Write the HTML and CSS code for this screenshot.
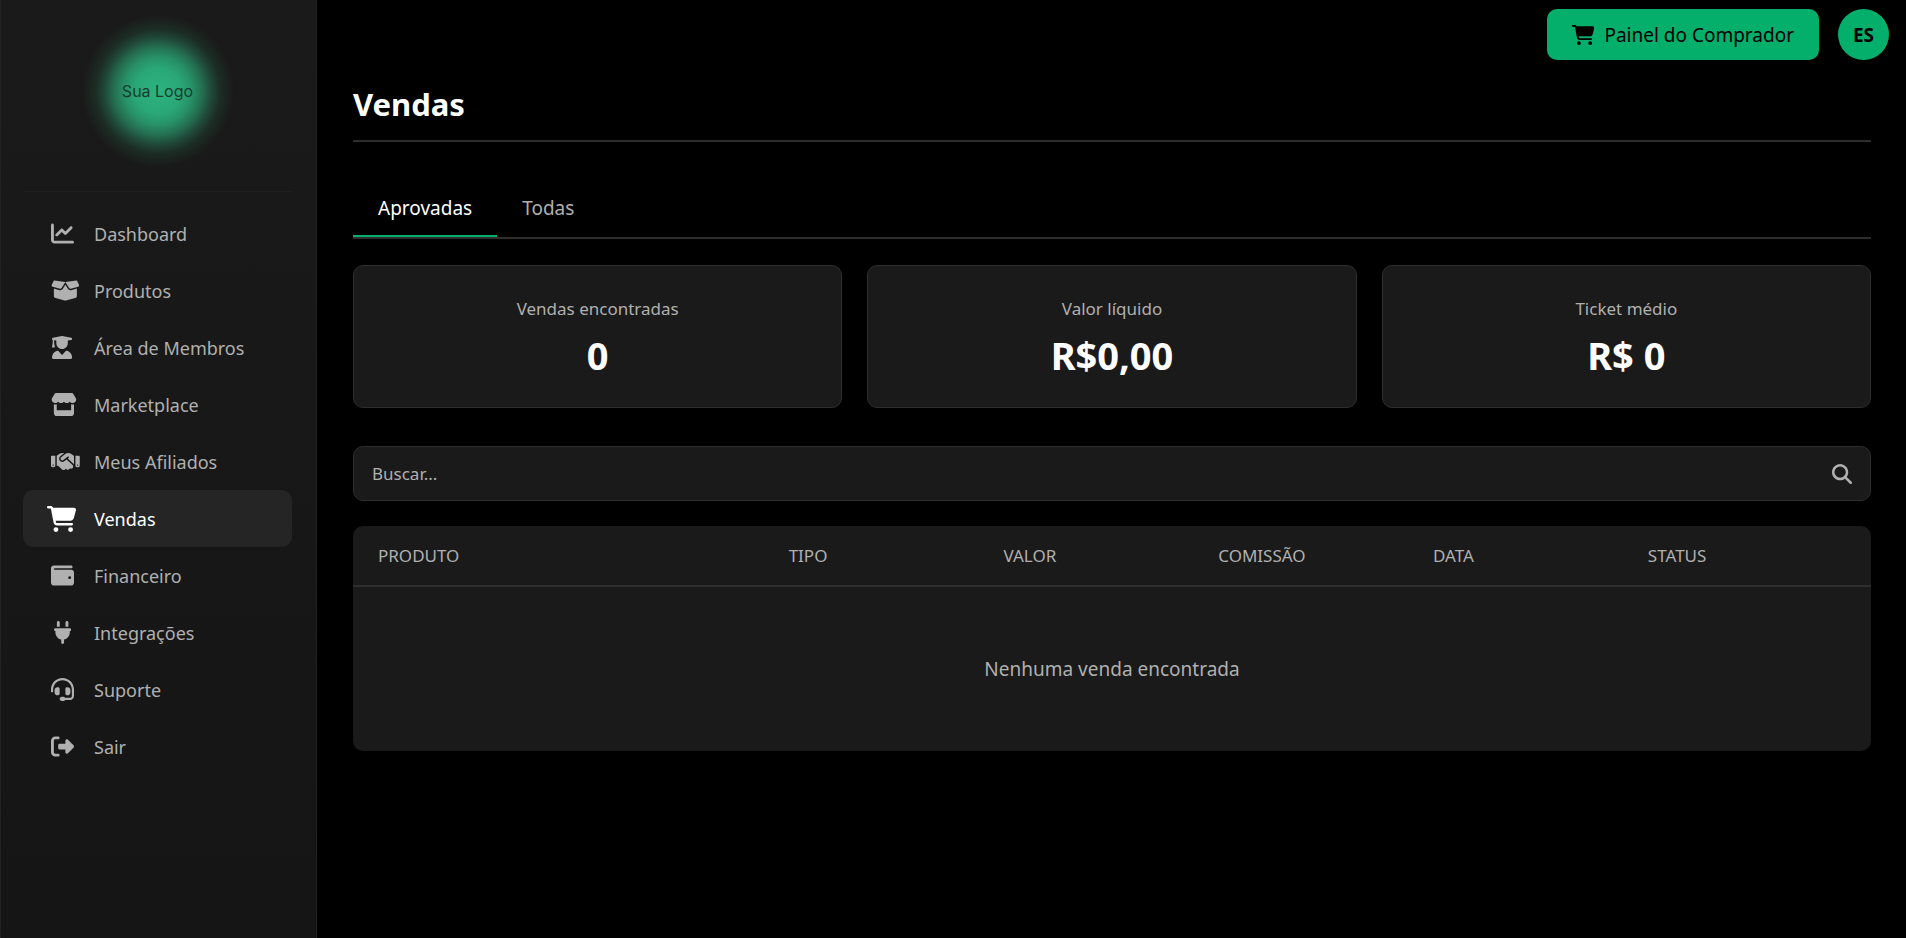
FILE: index.html
```
<!DOCTYPE html>
<html lang="pt-BR">
<head>
    <meta charset="UTF-8">
    <meta name="viewport" content="width=device-width, initial-scale=1.0">
    <title>Vendas</title>
    <link rel="stylesheet" href="styles.css">
</head>
<body>
    <aside class="sidebar">
        <div class="logo">Sua Logo</div>

        <nav class="menu">
            <a href="#" class="menu-item">
                <span class="menu-icon"><svg class="icon" viewBox="0 0 512 512"><path d="M64 64c0-17.7-14.3-32-32-32S0 46.3 0 64V400c0 44.2 35.8 80 80 80H480c17.7 0 32-14.3 32-32s-14.3-32-32-32H80c-8.8 0-16-7.2-16-16V64zm406.6 86.6c12.5-12.5 12.5-32.8 0-45.3s-32.8-12.5-45.3 0L320 210.7l-57.4-57.4c-12.5-12.5-32.8-12.5-45.3 0l-112 112c-12.5 12.5-12.5 32.8 0 45.3s32.8 12.5 45.3 0L240 221.3l57.4 57.4c12.5 12.5 32.8 12.5 45.3 0l128-128z"/></svg></span>
                Dashboard
            </a>
            <a href="#" class="menu-item">
                <span class="menu-icon"><svg class="icon" viewBox="0 0 640 512"><path d="M58.9 42.1c3-6.1 9.6-9.6 16.3-8.7L320 64 564.8 33.4c6.7-.8 13.3 2.7 16.3 8.7l41.7 83.4c9 17.9-.6 39.6-19.8 45.1L439.6 217.3c-13.9 4-28.8-1.9-36.2-14.3L320 64 236.6 203c-7.4 12.4-22.3 18.3-36.2 14.3L37.1 170.6c-19.3-5.5-28.8-27.2-19.8-45.1L58.9 42.1zM321.1 128l54.9 91.4c14.9 24.8 44.6 36.6 72.5 28.6L576 211.6v167c0 22-15 41.2-36.4 46.6l-204.1 51c-10.2 2.6-20.9 2.6-31 0l-204.1-51C79 419.7 64 400.5 64 378.5v-167L191.6 248c27.8 8 57.6-3.8 72.5-28.6L318.9 128h2.2z"/></svg></span>
                Produtos
            </a>
            <a href="#" class="menu-item">
                <span class="menu-icon"><svg class="icon" viewBox="0 0 448 512"><path d="M219.3 .5c3.1-.6 6.3-.6 9.4 0l200 40C439.9 42.7 448 52.6 448 64s-8.1 21.3-19.3 23.5L352 102.9V160c0 70.7-57.3 128-128 128s-128-57.3-128-128V102.9L48 93.3v65.1l15.7 78.4c.9 4.7-.3 9.6-3.3 13.3s-7.6 5.9-12.4 5.9H16c-4.8 0-9.3-2.1-12.4-5.9s-4.3-8.6-3.3-13.3L16 158.4V86.6C6.5 83.3 0 74.3 0 64C0 52.6 8.1 42.7 19.3 40.5l200-40zM111.9 327.7c10.5-3.4 21.8 .4 29.4 8.5l71 75.5c6.3 6.7 17 6.7 23.3 0l71-75.5c7.6-8.1 18.9-11.9 29.4-8.5C401 348.6 448 409.4 448 481.3c0 17-13.8 30.7-30.7 30.7H30.7C13.8 512 0 498.2 0 481.3c0-71.9 47-132.7 111.9-153.6z"/></svg></span>
                Área de Membros
            </a>
            <a href="#" class="menu-item">
                <span class="menu-icon"><svg class="icon" viewBox="0 0 576 512"><path d="M547.6 103.8L490.3 13.1C485.2 5 476.1 0 466.4 0H109.6C99.9 0 90.8 5 85.7 13.1L28.3 103.8c-29.6 46.8-3.4 111.9 51.9 119.4c4 .5 8.1 .8 12.1 .8c26.1 0 49.3-11.4 65.2-29c15.9 17.6 39.1 29 65.2 29c26.1 0 49.3-11.4 65.2-29c15.9 17.6 39.1 29 65.2 29c26.2 0 49.3-11.4 65.2-29c16 17.6 39.1 29 65.2 29c4.1 0 8.1-.3 12.1-.8c55.5-7.4 81.8-72.5 52.1-119.4zM499.7 254.9l-.1 0c-5.3 .7-10.7 1.1-16.2 1.1c-12.4 0-24.3-1.9-35.4-5.3V384H128V250.6c-11.2 3.5-23.2 5.4-35.6 5.4c-5.5 0-11-.4-16.3-1.1l-.1 0c-4.1-.6-8.1-1.3-12-2.3V384v64c0 35.3 28.7 64 64 64H448c35.3 0 64-28.7 64-64V384 252.6c-4 1-8 1.8-12.3 2.3z"/></svg></span>
                Marketplace
            </a>
            <a href="#" class="menu-item">
                <span class="menu-icon"><svg class="icon" viewBox="0 0 640 512"><path d="M323.4 85.2l-96.8 78.4c-16.1 13-19.2 36.4-7 53.1c12.9 17.8 38 21.3 55.3 7.8l99.3-77.2c7-5.4 17-4.2 22.5 2.8s4.2 17-2.8 22.5l-20.9 16.2L512 316.8V128h-.7l-3.9-2.5L434.8 79c-15.3-9.8-33.2-15-51.4-15c-21.8 0-43 7.5-60 21.2zm22.8 124.4l-51.7 40.2C263 274.3 217.3 268 193.7 235.6c-22.2-30.5-16.6-73.1 12.7-96.8l83.2-67.3c-11.6-4.9-24.1-7.4-36.8-7.4C234 64 215.7 69.6 200 80l-72 48V352h28.2l91.4 83.4c19.6 17.9 49.9 16.5 67.8-3.1c5.5-6.1 9.2-13.2 11.1-20.6l17 15.6c19.5 17.9 49.9 16.6 67.8-2.9c4.5-4.9 7.8-10.6 9.9-16.5c19.4 13 45.8 10.3 62.1-7.5c17.9-19.5 16.6-49.9-2.9-67.8l-134.2-123zM16 128c-8.8 0-16 7.2-16 16V352c0 17.7 14.3 32 32 32H64c17.7 0 32-14.3 32-32V128H16zM48 320a16 16 0 1 1 0 32 16 16 0 1 1 0-32zM544 128V352c0 17.7 14.3 32 32 32h32c17.7 0 32-14.3 32-32V144c0-8.8-7.2-16-16-16H544zm32 208a16 16 0 1 1 32 0 16 16 0 1 1 -32 0z"/></svg></span>
                Meus Afiliados
            </a>
            <a href="#" class="menu-item active" aria-current="page">
                <span class="menu-icon"><svg class="icon" viewBox="0 0 576 512"><path d="M0 24C0 10.7 10.7 0 24 0H69.5c22 0 41.5 12.8 50.6 32h411c26.3 0 45.5 25 38.6 50.4l-41 152.3c-8.5 31.4-37 53.3-69.5 53.3H170.7l5.4 28.5c2.2 11.3 12.1 19.5 23.6 19.5H488c13.3 0 24 10.7 24 24s-10.7 24-24 24H199.7c-34.6 0-64.3-24.6-70.7-58.5L77.4 54.5c-.7-3.8-4-6.5-7.9-6.5H24C10.7 48 0 37.3 0 24zM128 464a48 48 0 1 1 96 0 48 48 0 1 1 -96 0zm336-48a48 48 0 1 1 0 96 48 48 0 1 1 0-96z"/></svg></span>
                Vendas
            </a>
            <a href="#" class="menu-item">
                <span class="menu-icon"><svg class="icon" viewBox="0 0 512 512"><path d="M64 32C28.7 32 0 60.7 0 96V416c0 35.3 28.7 64 64 64H448c35.3 0 64-28.7 64-64V192c0-35.3-28.7-64-64-64H80c-8.8 0-16-7.2-16-16s7.2-16 16-16H448c17.7 0 32-14.3 32-32s-14.3-32-32-32H64zM416 272a32 32 0 1 1 0 64 32 32 0 1 1 0-64z"/></svg></span>
                Financeiro
            </a>
            <a href="#" class="menu-item">
                <span class="menu-icon"><svg class="icon" viewBox="0 0 384 512"><path d="M96 0C78.3 0 64 14.3 64 32v96h64V32c0-17.7-14.3-32-32-32zM288 0c-17.7 0-32 14.3-32 32v96h64V32c0-17.7-14.3-32-32-32zM32 160c-17.7 0-32 14.3-32 32s14.3 32 32 32v32c0 77.4 55 142 128 156.8V480c0 17.7 14.3 32 32 32s32-14.3 32-32V412.8C297 398 352 333.4 352 256V224c17.7 0 32-14.3 32-32s-14.3-32-32-32H32z"/></svg></span>
                Integrações
            </a>
            <a href="#" class="menu-item">
                <span class="menu-icon"><svg class="icon" viewBox="0 0 512 512"><path d="M256 48C141.1 48 48 141.1 48 256v40c0 13.3-10.7 24-24 24s-24-10.7-24-24V256C0 114.6 114.6 0 256 0S512 114.6 512 256V400.1c0 48.6-39.4 88-88.1 88L313.6 488c-8.3 14.3-23.8 24-41.6 24H240c-26.5 0-48-21.5-48-48s21.5-48 48-48h32c17.8 0 33.3 9.7 41.6 24l110.4 .1c22.1 0 40-17.9 40-40V256c0-114.9-93.1-208-208-208zM144 208h16c17.7 0 32 14.3 32 32V352c0 17.7-14.3 32-32 32H144c-35.3 0-64-28.7-64-64V272c0-35.3 28.7-64 64-64zm224 0c35.3 0 64 28.7 64 64v48c0 35.3-28.7 64-64 64H352c-17.7 0-32-14.3-32-32V240c0-17.7 14.3-32 32-32h16z"/></svg></span>
                Suporte
            </a>
            <a href="#" class="menu-item">
                <span class="menu-icon"><svg class="icon" viewBox="0 0 512 512"><path d="M377.9 105.9L500.7 228.7c7.2 7.2 11.3 17.1 11.3 27.3s-4.1 20.1-11.3 27.3L377.9 406.1c-6.4 6.4-15 9.9-24 9.9c-18.7 0-33.9-15.2-33.9-33.9l0-62.1-128 0c-17.7 0-32-14.3-32-32l0-64c0-17.7 14.3-32 32-32l128 0 0-62.1c0-18.7 15.2-33.9 33.9-33.9c9 0 17.6 3.6 24 9.9zM160 96L96 96c-17.7 0-32 14.3-32 32l0 256c0 17.7 14.3 32 32 32l64 0c17.7 0 32 14.3 32 32s-14.3 32-32 32l-64 0c-53 0-96-43-96-96L0 128C0 75 43 32 96 32l64 0c17.7 0 32 14.3 32 32s-14.3 32-32 32z"/></svg></span>
                Sair
            </a>
        </nav>
    </aside>

    <div class="page">
        <header class="topbar">
            <button type="button" class="btn-buyer">
                <svg class="icon" viewBox="0 0 576 512"><path d="M0 24C0 10.7 10.7 0 24 0H69.5c22 0 41.5 12.8 50.6 32h411c26.3 0 45.5 25 38.6 50.4l-41 152.3c-8.5 31.4-37 53.3-69.5 53.3H170.7l5.4 28.5c2.2 11.3 12.1 19.5 23.6 19.5H488c13.3 0 24 10.7 24 24s-10.7 24-24 24H199.7c-34.6 0-64.3-24.6-70.7-58.5L77.4 54.5c-.7-3.8-4-6.5-7.9-6.5H24C10.7 48 0 37.3 0 24zM128 464a48 48 0 1 1 96 0 48 48 0 1 1 -96 0zm336-48a48 48 0 1 1 0 96 48 48 0 1 1 0-96z"/></svg>
                Painel do Comprador
            </button>
            <button type="button" class="avatar">ES</button>
        </header>

        <main class="content">
            <h1 class="page-title">Vendas</h1>

            <div class="tabs" role="tablist">
                <button type="button" class="tab active" role="tab" aria-selected="true">Aprovadas</button>
                <button type="button" class="tab" role="tab" aria-selected="false">Todas</button>
            </div>

            <div class="cards">
                <div class="card">
                    <div class="card-label">Vendas encontradas</div>
                    <div class="card-value">0</div>
                </div>
                <div class="card">
                    <div class="card-label">Valor líquido</div>
                    <div class="card-value">R$0,00</div>
                </div>
                <div class="card">
                    <div class="card-label">Ticket médio</div>
                    <div class="card-value">R$ 0</div>
                </div>
            </div>

            <form class="search">
                <input type="text" class="search-input" placeholder="Buscar..." aria-label="Buscar">
                <button type="submit" class="search-btn" aria-label="Pesquisar">
                    <svg class="icon" viewBox="0 0 512 512"><path d="M416 208c0 45.9-14.9 88.3-40 122.7L502.6 457.4c12.5 12.5 12.5 32.8 0 45.3s-32.8 12.5-45.3 0L330.7 376c-34.4 25.2-76.8 40-122.7 40C93.1 416 0 322.9 0 208S93.1 0 208 0S416 93.1 416 208zM208 352a144 144 0 1 0 0-288 144 144 0 1 0 0 288z"/></svg>
                </button>
            </form>

            <table class="sales">
                <thead>
                    <tr>
                        <th class="col-product">Produto</th>
                        <th>Tipo</th>
                        <th>Valor</th>
                        <th>Comissão</th>
                        <th>Data</th>
                        <th class="col-status">Status</th>
                    </tr>
                </thead>
                <tbody>
                    <tr>
                        <td class="empty" colspan="6">Nenhuma venda encontrada</td>
                    </tr>
                </tbody>
            </table>
        </main>
    </div>
</body>
</html>
```
FILE: styles.css
```
:root {
    --primary: #04af6c;
    --background: #000000;
    --surface: #1a1a1a;
    --surface-active: #252525;
    --border: #2e2e2e;
    --text: #ffffff;
    --text-muted: #b0b0b0;
    --radius: 10px;
}

* {
    margin: 0;
    padding: 0;
    box-sizing: border-box;
}

body {
    display: flex;
    min-height: 100vh;
    background: var(--background);
    color: var(--text);
    font-family: "Noto Sans", sans-serif;
    font-size: 19px;
    line-height: 24px;
}

button,
input {
    font: inherit;
    color: inherit;
    background: none;
    border: none;
}

button {
    cursor: pointer;
}

.icon {
    height: 23px;
    flex-shrink: 0;
    fill: currentColor;
}

/* Sidebar */
.sidebar {
    width: 317px;
    flex-shrink: 0;
    padding: 15px 24px 24px 22px;
    background: linear-gradient(#1a1a1a, #151515);
    border: 1px solid #222222;
    border-width: 0 1px;
}

.logo {
    display: flex;
    align-items: center;
    justify-content: center;
    width: 152px;
    height: 152px;
    margin: 0 auto 24px;
    background: radial-gradient(circle closest-side, #2cb380 0%, #2aa877 30%, #279268 44%, #246f51 58%, #20493a 70%, #1c2d25 82%, rgba(26, 26, 26, 0) 100%);
    color: #173d2f;
    font-family: Inter, sans-serif;
    font-size: 16px;
}

.menu {
    padding-top: 13px;
    border-top: 1px solid #1f1f1f;
}

.menu-item {
    display: flex;
    align-items: center;
    gap: 20px;
    height: 57px;
    padding: 0 28px;
    border-radius: var(--radius);
    color: var(--text-muted);
    font-size: 18px;
    text-decoration: none;
}

.menu-icon {
    display: flex;
    justify-content: safe center;
    width: 23px;
}

.menu-item.active {
    gap: 18px;
    padding: 0 24px;
    background: var(--surface-active);
    color: var(--text);
}

.menu-item.active .menu-icon {
    width: 29px;
}

.menu-item.active .icon {
    height: 26px;
}

/* Topbar */
.page {
    flex: 1;
    min-width: 0;
}

.topbar {
    display: flex;
    justify-content: flex-end;
    gap: 19px;
    padding: 9px 17px 0;
}

.btn-buyer {
    display: flex;
    align-items: center;
    gap: 10px;
    height: 51px;
    padding: 0 25px;
    border-radius: var(--radius);
    background: var(--primary);
    color: #000000;
}

.btn-buyer .icon {
    height: 20px;
}

.avatar {
    width: 51px;
    height: 51px;
    border-radius: 50%;
    background: var(--primary);
    color: #000000;
    font-weight: 700;
}

/* Content */
.content {
    padding: 24px 35px 24px 36px;
}

.page-title {
    padding-bottom: 16px;
    border-bottom: 2px solid var(--border);
    font-size: 31px;
    line-height: 40px;
}

.tabs {
    display: flex;
    margin: 38px 0 26px;
    border-bottom: 2px solid var(--border);
}

.tab {
    height: 57px;
    padding: 0 25px;
    border-bottom: 2px solid transparent;
    color: var(--text-muted);
}

.tab.active {
    border-color: var(--primary);
    color: var(--text);
}

.cards {
    display: grid;
    grid-template-columns: repeat(3, 1fr);
    gap: 25px;
}

.card {
    padding: 31px 24px 28px;
    background: var(--surface);
    border: 1px solid var(--border);
    border-radius: var(--radius);
    text-align: center;
}

.card-label {
    margin-bottom: 10px;
    color: var(--text-muted);
    font-size: 17px;
}

.card-value {
    font-size: 38px;
    font-weight: 700;
    line-height: 48px;
}

.search {
    display: flex;
    align-items: center;
    height: 55px;
    margin: 38px 0 25px;
    padding: 0 18px;
    background: var(--surface);
    border: 1px solid var(--border);
    border-radius: var(--radius);
}

.search-input {
    flex: 1;
    font-size: 17px;
    outline: none;
}

.search-input::placeholder {
    color: var(--text-muted);
    opacity: 1;
}

.search-btn {
    display: flex;
    color: var(--text-muted);
}

.search-btn .icon {
    height: 20px;
}

.sales {
    width: 100%;
    table-layout: fixed;
    border-collapse: separate;
    border-spacing: 0;
    background: var(--surface);
    border-radius: var(--radius);
    color: var(--text-muted);
}

.sales th {
    height: 61px;
    border-bottom: 2px solid var(--border);
    font-size: 17px;
    font-weight: 400;
    text-align: left;
    text-transform: uppercase;
}

.sales .col-product {
    width: 28.7%;
    padding-left: 25px;
}

.sales .col-status {
    width: 14.7%;
}

.sales .empty {
    padding: 70px 25px;
    text-align: center;
}
```
